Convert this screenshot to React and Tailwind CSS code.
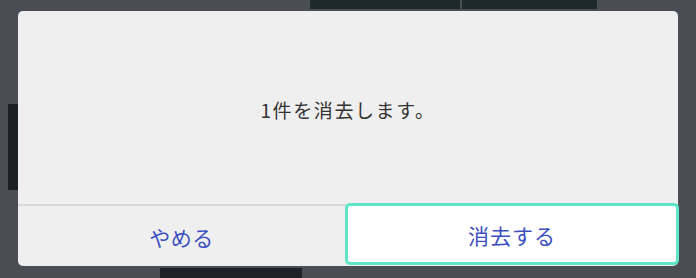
import React from "react";

const font = { fontFamily: '"Noto Sans CJK JP", "Noto Sans", sans-serif' };

const App = () => {
  return (
    <div className="relative w-[696px] h-[278px] overflow-hidden bg-[#4a4d53]" style={font}>
      {/* dimmed page behind the dialog */}
      <div className="flex flex-col h-full">
        <div className="flex h-[9px] gap-[2px] pl-[310px]">
          <div className="w-[150px] bg-[#1e2a2a]" />
          <div className="w-[135px] bg-[#1e2a2a]" />
        </div>
        <div className="flex-1 flex pt-[95px]">
          <div className="ml-[8px] w-[10px] h-[86px] bg-[#1b1f26]" />
        </div>
        <div className="flex h-[10px] pl-[160px]">
          <div className="w-[142px] bg-[#1e2128]" />
        </div>
      </div>

      {/* dialog */}
      <div className="absolute inset-0 pl-[18px] pt-[11px]">
        <div className="w-[660px] h-[255px] rounded-[5px] bg-[#efefef] flex flex-col">
          <div className="flex-1 flex items-center justify-center pt-[5px]">
            <p className="text-[19px] text-[#333] tracking-[1.6px]">1件を消去します。</p>
          </div>
          <div className="h-[2px] bg-[#d8d8d8]" />
          <div className="h-[60px] flex">
            <button className="w-[327px] flex items-center justify-center pt-[3px] text-[21px] tracking-[0.5px] text-[#3c4fc0]">
              やめる
            </button>
            <button className="flex-1 -mt-[3px] -mr-[1px] mb-[1px] rounded-[5px] border-[3px] border-[#5fe6c6] bg-white flex items-center justify-center pt-[3px] text-[21px] tracking-[1px] text-[#3c4fc0]">
              消去する
            </button>
          </div>
        </div>
      </div>
    </div>
  );
};

export default App;
